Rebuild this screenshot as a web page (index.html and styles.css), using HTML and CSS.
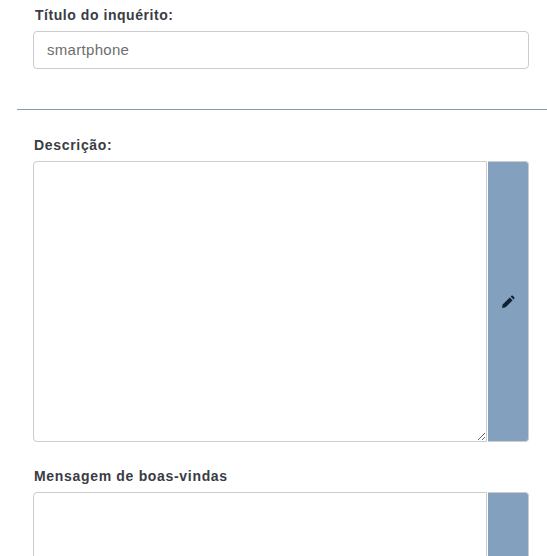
FILE: index.html
```html
<!DOCTYPE html>
<html>
<head>
	<title>Inquérito</title>
	<meta charset="utf-8">
	<link rel="stylesheet" href="styles.css">
</head>
<body>
<div class="form">
	<div class="title-block">
		<label class="label label-title">Título do inquérito:</label>
		<input class="field" type="text" value="smartphone">
	</div>
	<hr class="divider">
	<div class="block">
		<label class="label">Descrição:</label>
		<div class="group">
			<textarea class="area"></textarea>
			<span class="addon">
				<svg class="pencil" viewBox="0 0 14 14" width="14" height="14">
					<path d="M1 13l.7-3.6L8.7 2.4l2.9 2.9-7 7z" fill="#0f2233"/>
					<path d="M9.6 1.5l.9-.8c.4-.3.9-.3 1.2 0l1.6 1.6c.3.3.3.8 0 1.2l-.8.9z" fill="#0f2233"/>
				</svg>
			</span>
		</div>
	</div>
	<div class="block block-next">
		<label class="label">Mensagem de boas-vindas</label>
		<div class="group">
			<textarea class="area"></textarea>
			<span class="addon"></span>
		</div>
	</div>
</div>
</body>
</html>
```

FILE: styles.css
```css
*{
	margin: 0;
	padding: 0;
	box-sizing: border-box;
}
html,body{
	height: 100%;
	overflow: hidden;
}
body{
	background: #fff;
	font-family: "Liberation Sans", Arial, sans-serif;
	color: #3a3c45;
}
.form{
	padding: 7px 0 0 17px;
}
.title-block{
	padding: 0 18px 0 16px;
}
.label{
	display: block;
	font-size: 14px;
	font-weight: bold;
	line-height: 17px;
	letter-spacing: .68px;
	margin-bottom: 7px;
	padding-left: 1px;
}
.label-title{
	padding-left: 2px;
	letter-spacing: .55px;
}
.field{
	display: block;
	width: 100%;
	height: 38px;
	padding: 0 13px 2px;
	border: 1px solid #ccc;
	border-radius: 4px;
	font: 15px "Liberation Sans", Arial, sans-serif;
	letter-spacing: .3px;
	color: #6d6d6d;
	outline: none;
}
.divider{
	border: 0;
	border-top: 1px solid #8a9bb0;
	margin-top: 40px;
}
.block{
	padding: 27px 18px 0 16px;
}
.block-next{
	padding-top: 26px;
}
.group{
	display: flex;
	height: 281px;
}
.area{
	flex: 1;
	min-width: 0;
	border: 1px solid #ccc;
	border-radius: 4px 0 0 4px;
	outline: none;
	background: #fff;
}
.addon{
	width: 41px;
	margin-left: 1px;
	background: #83a0be;
	border: 1px solid #ccc;
	border-left: 0;
	border-radius: 0 4px 4px 0;
	display: flex;
	align-items: center;
	justify-content: center;
}
.pencil{
	display: block;
}
```
